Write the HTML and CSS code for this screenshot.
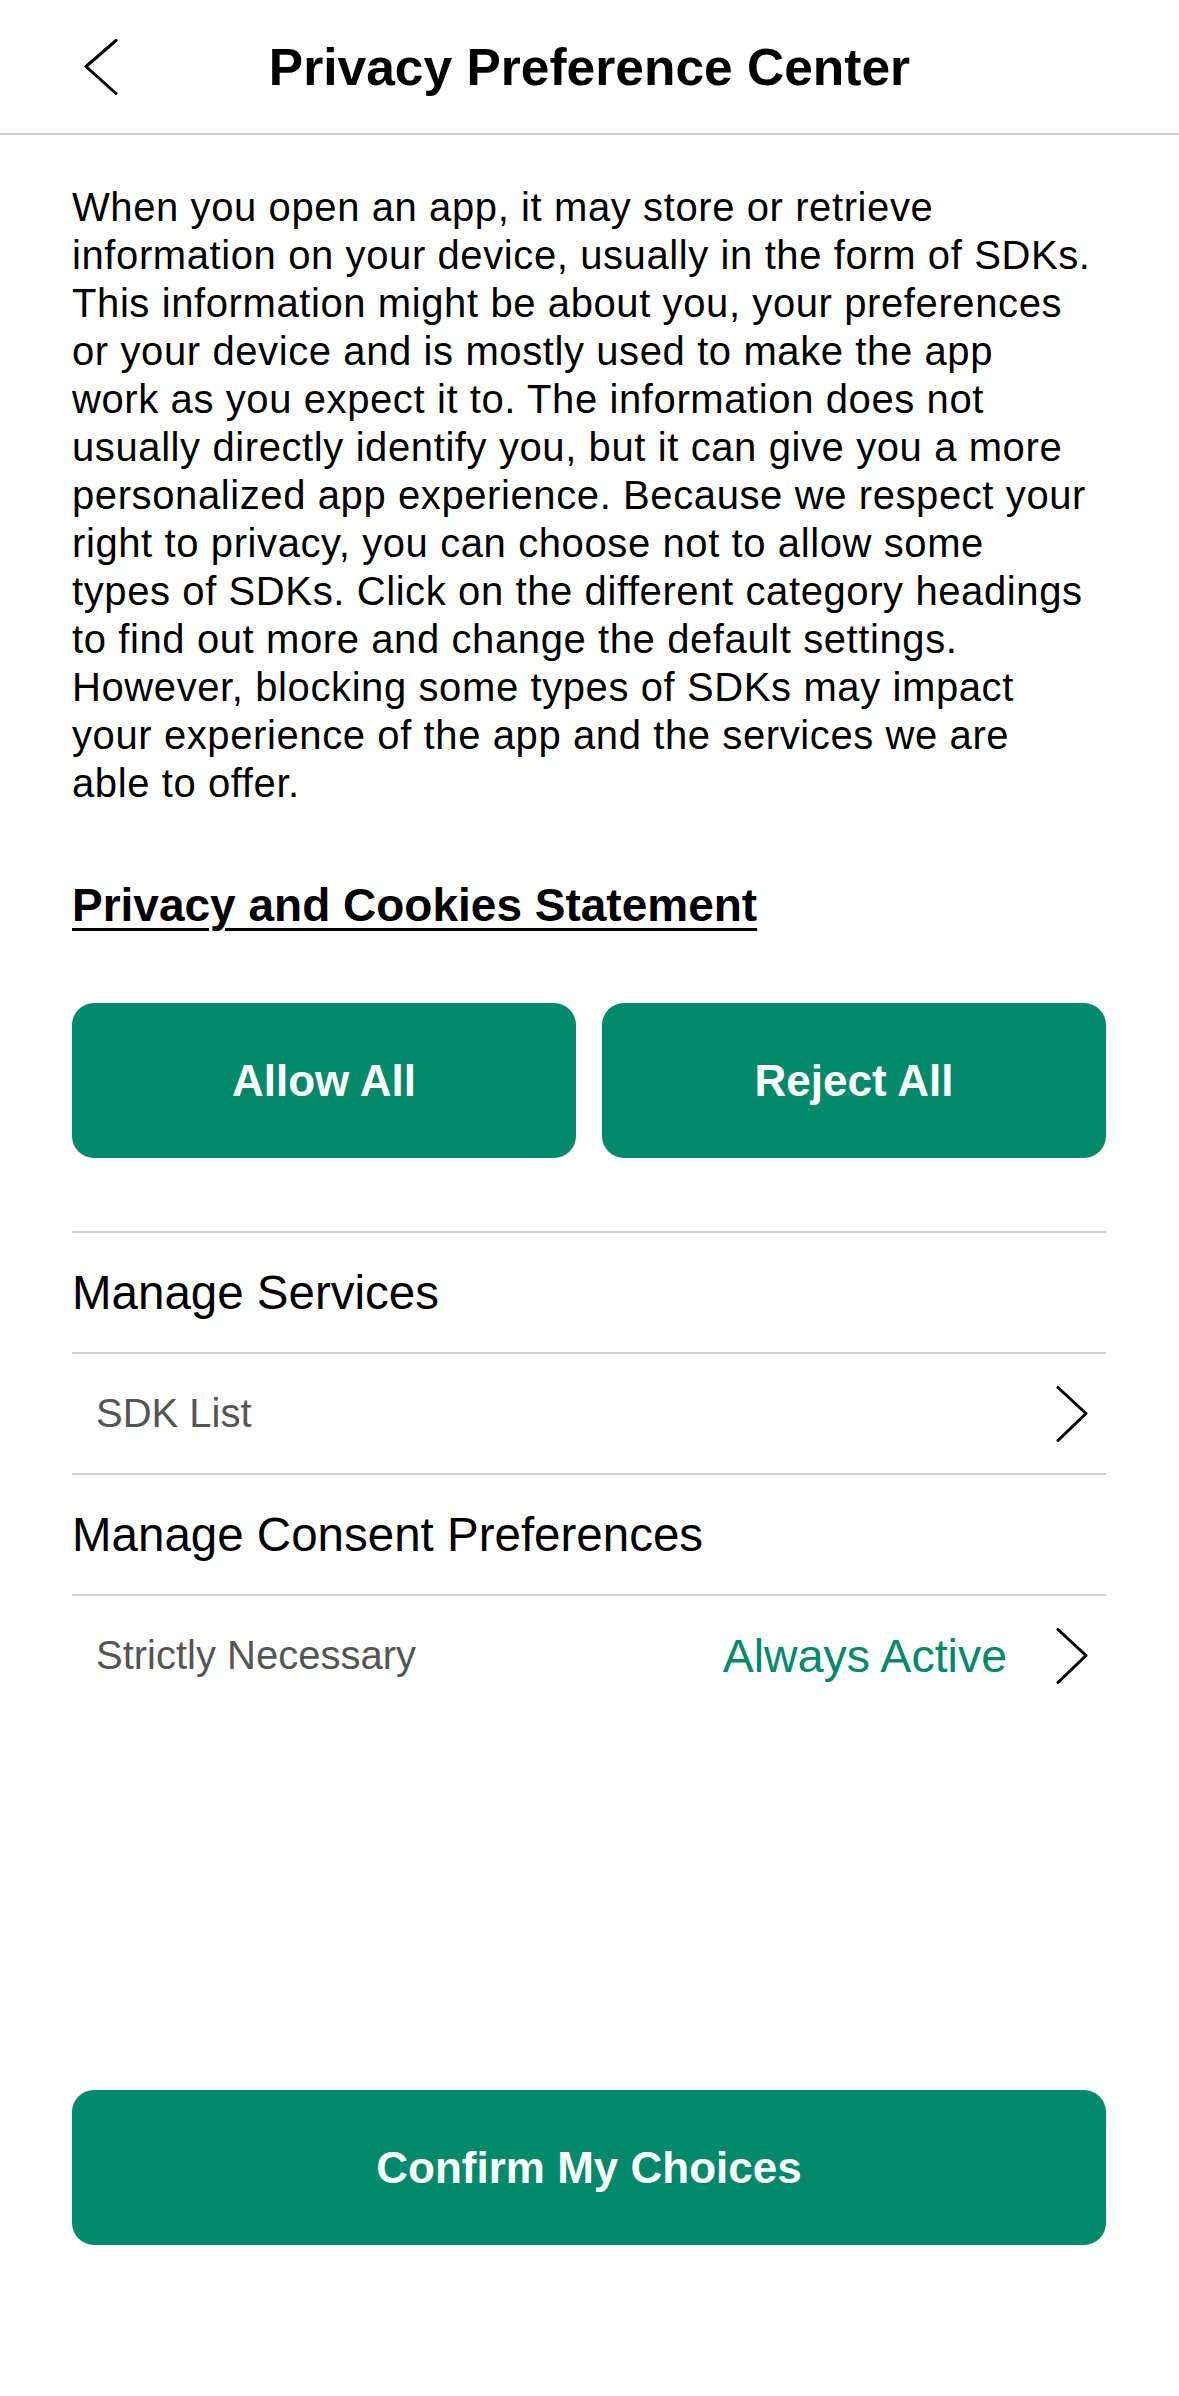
FILE: index.html
```html
<!DOCTYPE html>
<html lang="en">
<head>
<meta charset="utf-8">
<title>Privacy Preference Center</title>
<link rel="stylesheet" href="styles.css">
</head>
<body>
<header class="topbar">
  <button class="back" aria-label="Back">
    <svg class="back-icon" viewBox="0 0 34 56" width="34" height="56" aria-hidden="true">
      <polyline points="32,1.5 2,27.5 32,54.5" fill="none" stroke="#000" stroke-width="3" stroke-linecap="round" stroke-linejoin="round"/>
    </svg>
  </button>
  <h1 class="title">Privacy Preference Center</h1>
  <span class="spacer"></span>
</header>
<main class="content">
  <p class="intro">When you open an app, it may store or retrieve<br>
information on your device, usually in the form of SDKs.<br>
This information might be about you, your preferences<br>
or your device and is mostly used to make the app<br>
work as you expect it to. The information does not<br>
usually directly identify you, but it can give you a more<br>
personalized app experience. Because we respect your<br>
right to privacy, you can choose not to allow some<br>
types of SDKs. Click on the different category headings<br>
to find out more and change the default settings.<br>
However, blocking some types of SDKs may impact<br>
your experience of the app and the services we are<br>
able to offer.</p>
  <p class="policy"><a href="#" class="policy-link">Privacy and Cookies Statement</a></p>
  <div class="actions">
    <button class="btn">Allow All</button>
    <button class="btn">Reject All</button>
  </div>
  <section class="list">
    <div class="list-heading">Manage Services</div>
    <div class="list-row">
      <span class="row-label">SDK List</span>
      <svg class="chevron" viewBox="0 0 32 56" width="32" height="56" aria-hidden="true">
        <polyline points="2,1.5 30,27.5 2,54.5" fill="none" stroke="#000" stroke-width="3" stroke-linecap="round" stroke-linejoin="round"/>
      </svg>
    </div>
    <div class="list-heading">Manage Consent Preferences</div>
    <div class="list-row">
      <span class="row-label">Strictly Necessary</span>
      <span class="row-status">Always Active</span>
      <svg class="chevron" viewBox="0 0 32 56" width="32" height="56" aria-hidden="true">
        <polyline points="2,1.5 30,27.5 2,54.5" fill="none" stroke="#000" stroke-width="3" stroke-linecap="round" stroke-linejoin="round"/>
      </svg>
    </div>
  </section>
  <button class="btn btn-confirm">Confirm My Choices</button>
</main>
</body>
</html>
```

FILE: styles.css
```css
* { box-sizing: border-box; }

html, body {
  margin: 0;
  padding: 0;
  background: #ffffff;
}

body {
  font-family: "Liberation Sans", Arial, sans-serif;
  color: #000;
  width: 1179px;
  min-height: 2396px;
}

.topbar {
  display: grid;
  grid-template-columns: 1fr auto 1fr;
  align-items: center;
  height: 135px;
  padding: 0 84px;
  border-bottom: 2px solid #cfcfcf;
}

.back {
  justify-self: start;
  background: none;
  border: 0;
  padding: 0;
  display: flex;
  cursor: pointer;
}

.back-icon { display: block; }

.title {
  margin: 0;
  font-size: 51.5px;
  font-weight: 700;
  line-height: 60px;
  white-space: nowrap;
}

.content {
  padding: 48px 73px 0 72px;
}

.intro {
  margin: 0;
  font-size: 40px;
  letter-spacing: 0.6px;
  line-height: 48px;
}

.policy {
  margin: 70px 0 0;
  font-size: 46px;
  line-height: 56px;
}

.policy-link {
  color: #000;
  font-weight: 700;
  text-decoration: underline;
  text-decoration-thickness: 3px;
  text-underline-offset: 7px;
}

.actions {
  margin-top: 70px;
  display: grid;
  grid-template-columns: 1fr 1fr;
  gap: 26px;
}

.btn {
  height: 155px;
  border: 0;
  border-radius: 22px;
  background: #00896a;
  color: #ffffff;
  font-family: "Liberation Sans", Arial, sans-serif;
  font-size: 44px;
  font-weight: 700;
  cursor: pointer;
}

.list {
  margin-top: 73px;
}

.list-heading,
.list-row {
  height: 121px;
  border-top: 2px solid #d2d2d2;
  display: flex;
  align-items: center;
}

.list-heading {
  font-size: 47.5px;
}

.list-row {
  padding: 0 18px 0 24px;
}

.row-label {
  flex: 1;
  font-size: 40px;
  color: #555555;
}

.row-status {
  font-size: 46.5px;
  color: #00896a;
  margin-right: 49px;
}

.chevron { display: block; }

.btn-confirm {
  display: block;
  width: 100%;
  margin-top: 375px;
}
```
